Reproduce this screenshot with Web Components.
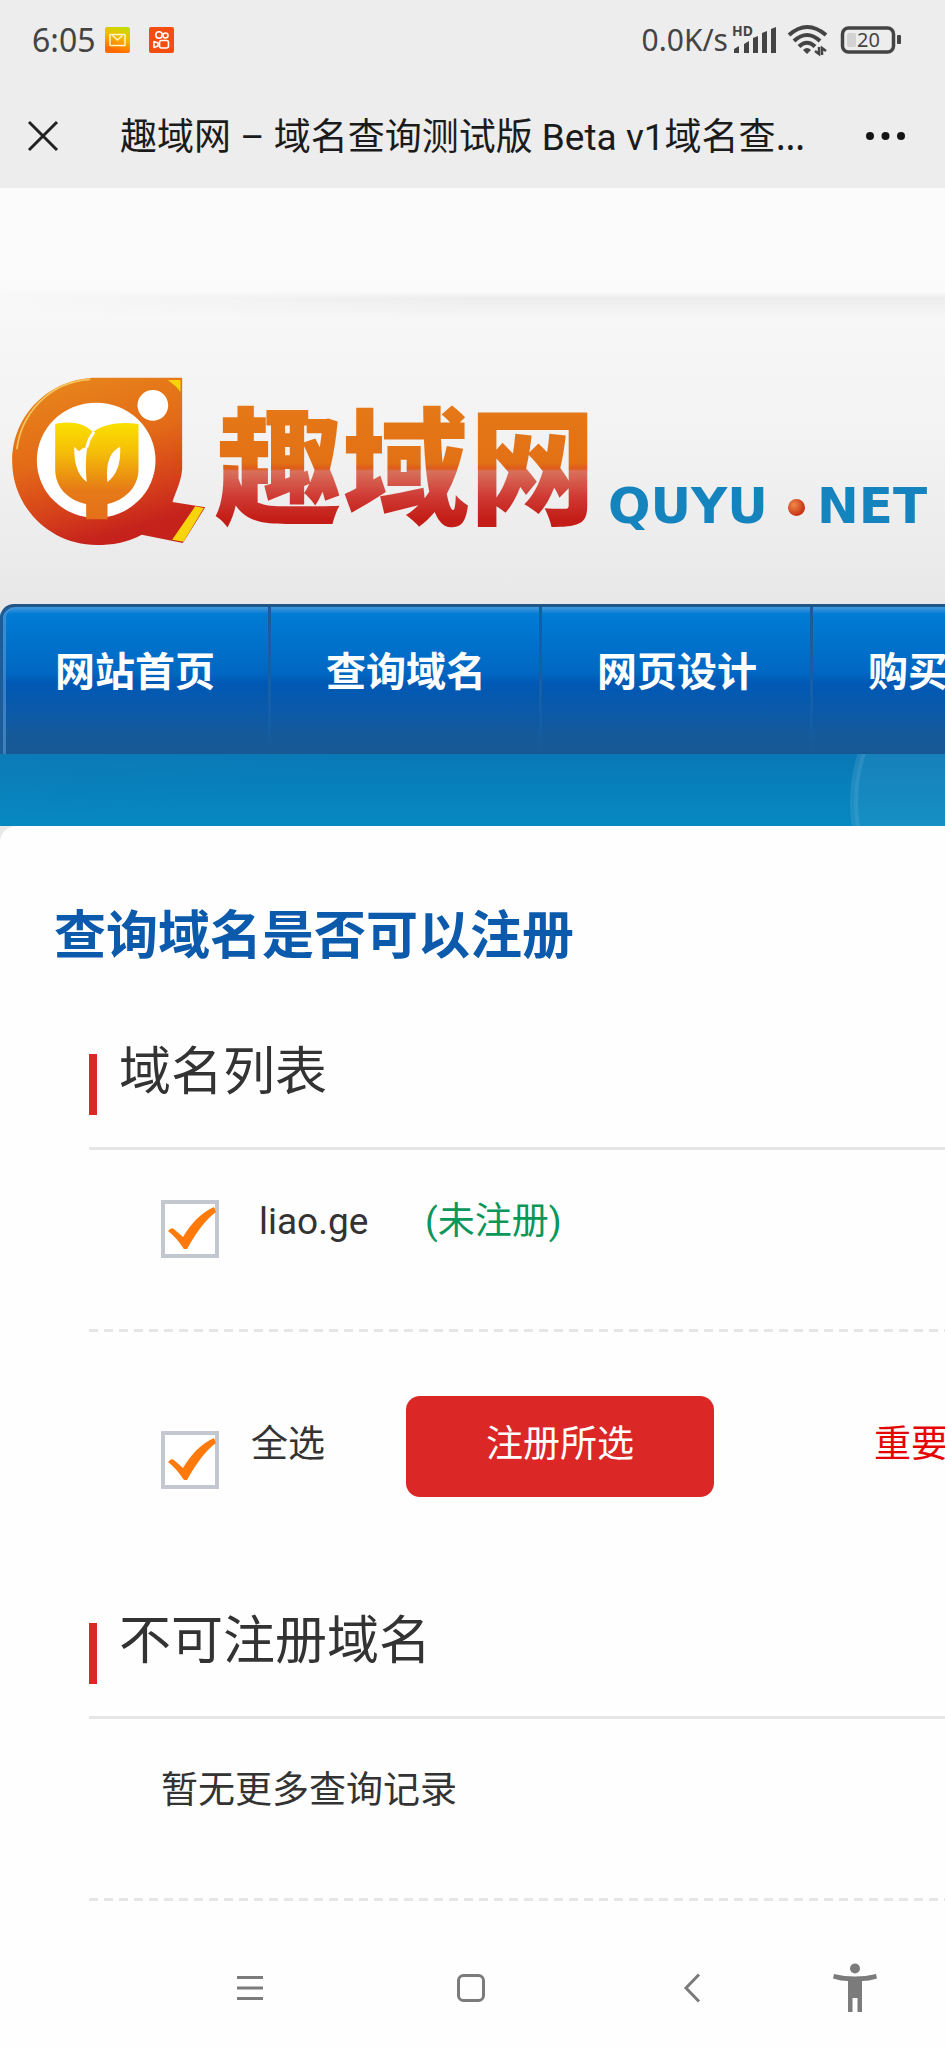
<!DOCTYPE html>
<html lang="zh-CN">
<head>
<meta charset="utf-8">
<meta name="viewport" content="width=device-width, initial-scale=1">
<title>趣域网 – 域名查询</title>
<style>
  html, body { margin: 0; }
  body {
    min-height: 100vh;
    display: flex;
    flex-direction: column;
    overflow-x: hidden;
    background: #fefefe;
    color: #333;
    font-family: Roboto, "Noto Sans CJK SC", sans-serif;
    font-size: 37px;
    line-height: 52px;
  }
</style>
</head>
<body>
<status-bar></status-bar>
<title-bar>趣域网 – 域名查询测试版 Beta v1域名查<b>…</b></title-bar>
<site-header></site-header>
<site-nav>
  <nav-item>网站首页</nav-item>
  <nav-item>查询域名</nav-item>
  <nav-item>网页设计</nav-item>
  <nav-item>购买</nav-item>
</site-nav>
<query-panel heading="查询域名是否可以注册">
  <domain-section heading="域名列表">
    <list-row divided>
      <check-box style="--drop: 4px; --gap: 40px; --width: 264px">liao.ge</check-box>
      <status-text>(未注册)</status-text>
    </list-row>
    <list-row tall>
      <check-box style="--drop: 35px; --lift: 23px; --gap: 32px; --width: 245px">全选</check-box>
      <action-button>注册所选</action-button>
      <status-text warning>重要</status-text>
    </list-row>
  </domain-section>
  <domain-section heading="不可注册域名">
    <list-row divided>暂无更多查询记录</list-row>
  </domain-section>
</query-panel>
<system-nav></system-nav>

<script>
const define = (name, html, setup) => customElements.define(name, class extends HTMLElement {
  constructor() {
    super();
    this.attachShadow({ mode: 'open' }).innerHTML = html;
  }
  connectedCallback() {
    if (setup) setup(this, this.shadowRoot);
  }
});
const setHeading = (host, root) => {
  root.querySelector('.heading').textContent = host.getAttribute('heading');
};

define('status-bar', `
<style>
  :host { display: flex; align-items: center; justify-content: space-between; height: 80px; padding: 0 44px 0 32px; background: #ededed; color: #444; font: 30px/40px "Noto Sans", sans-serif; }
  div { display: flex; align-items: center; }
  svg { display: block; overflow: visible; }
  .time { font-size: 32px; }
  .app { margin-left: 19px; }
  .mail { margin-left: 9px; }
  .signal { margin-left: 4px; }
  .wifi { margin-left: 9px; }
  .battery { margin-left: 12px; }
</style>
<div>
  <span class="time">6:05</span>
  <svg class="mail" width="25" height="26" viewBox="0 0 25 26"><defs><linearGradient id="m" x1="1" y1="0" x2=".7" y2="1"><stop offset="0" stop-color="#b8e500"/><stop offset=".5" stop-color="#f5b800"/><stop offset="1" stop-color="#ff6a00"/></linearGradient></defs><rect width="25" height="26" rx="2" fill="url(#m)"/><path d="M5 7.500h15v11H5zM7.500 8.500l5 4.500 5-4.500" fill="none" stroke="#fff6c8" stroke-width="1.500" stroke-linejoin="round"/></svg>
  <svg class="app" width="25" height="26" viewBox="0 0 25 26"><rect width="25" height="26" rx="2" fill="#f44d12"/><g fill="none" stroke="#fff" stroke-width="1.600"><circle cx="10" cy="8" r="3.200"/><circle cx="16.500" cy="8.500" r="2.500"/><rect x="10.500" y="13.500" width="9" height="7.500" rx="2"/><path d="M5 14.500v6l4-1.500v-3z" stroke-linejoin="round"/></g></svg>
</div>
<div>
  <span>0.0K/s</span>
  <svg class="signal" width="46" height="30" viewBox="0 0 46 30"><text x="0" y="11" font-family="Noto Sans, sans-serif" font-size="14" font-weight="700" fill="#444">HD</text><g fill="#444"><path d="M2 28v-4l5-3v7zM12 28V19l5-3v12zM21 28V13l5-2v17zM30 28V8l5-2v22zM39 28V4l5-2v26z"/></g></svg>
  <svg class="wifi" width="42" height="32" viewBox="0 0 42 32"><g fill="none" stroke="#444" stroke-width="4"><path d="M2 11Q20 -5 39 11"/><path d="M7 17Q20 5 33 17"/><path d="M12 22.500Q20 15 28 22.500"/></g><path d="M16 26q4-4 8 0l-4 4z" fill="#444"/><path d="M32 23v7l-4-3M35 31v-7l4 3" fill="none" stroke="#444" stroke-width="2.500"/></svg>
  <svg class="battery" width="60" height="28" viewBox="0 0 60 28"><rect x="1.500" y="2" width="51" height="24" rx="6" fill="none" stroke="#444" stroke-width="3.500"/><rect x="6" y="7" width="9" height="14" rx="2" fill="#d2d2d2"/><rect x="56" y="9" width="4" height="9" rx="1" fill="#444"/><text x="16" y="21" font-family="Noto Sans, sans-serif" font-size="20" fill="#444">20</text></svg>
</div>`);

define('title-bar', `
<style>
  :host { display: flex; align-items: center; height: 104px; padding: 4px 38px 0 26px; background: #ededed; color: #1b1b1b; font-size: 37px; }
  button { border: 0; padding: 0; background: none; }
  svg { display: block; }
  h1 { flex: 1; margin: 2px 0 0 60px; font: inherit; white-space: nowrap; overflow: hidden; }
  ::slotted(b) { font-weight: 400; font-family: "Noto Sans", sans-serif; }
</style>
<button aria-label="关闭"><svg width="34" height="34" viewBox="0 0 34 34"><path d="M3 3l28 28M31 3L3 31" stroke="#222" stroke-width="3"/></svg></button>
<h1><slot></slot></h1>
<button aria-label="更多"><svg width="42" height="12" viewBox="0 0 42 12"><g fill="#151515"><circle cx="5" cy="6" r="4"/><circle cx="20.500" cy="6" r="4"/><circle cx="36" cy="6" r="4"/></g></svg></button>`);

define('site-header', `
<style>
  :host { display: block; padding: 188px 0 58px 10px; background: linear-gradient(90deg, #f8f8f8 0, #f8f8f800 50%) 0 104px / 100% 28px no-repeat, linear-gradient(#fbfbfb 0, #fafafa 104px, #ededed 110px, #f7f7f7 132px, #f3f3f3 240px, #e8e8e8 100%); }
  a { display: flex; align-items: flex-start; text-decoration: none; white-space: nowrap; }
  svg { display: block; flex: none; }
  .name { margin: 14px 0 0 8px; font: 900 127px/140px "Noto Sans CJK SC", sans-serif; color: transparent; background: linear-gradient(#e67a17 0, #e27115 52%, #dd5c17 56%, #d9705c 58%, #cf3a34 76%, #c41d17 92%); -webkit-background-clip: text; background-clip: text; }
  .latin { display: flex; align-items: center; margin: 104px 0 0 12px; font: 700 50px/52px "DejaVu Sans", sans-serif; color: #1583bd; }
  .dot { width: 17px; height: 17px; margin: 2px 12px 0 20px; border-radius: 50%; background: radial-gradient(circle at 35% 35%, #ef8a4a, #c83215 70%); }
</style>
<a href="#">
  <svg width="197" height="170" viewBox="30 50 590 510" aria-hidden="true">
    <defs>
      <linearGradient id="b" x1="0" y1="0" x2=".35" y2="1"><stop offset="0" stop-color="#e88a1c"/><stop offset=".5" stop-color="#e36a17"/><stop offset=".8" stop-color="#d5401b"/><stop offset="1" stop-color="#c5221c"/></linearGradient>
      <linearGradient id="g" x1="0" y1="0" x2="0" y2="1"><stop offset="0" stop-color="#fbe000"/><stop offset=".3" stop-color="#f5bf08"/><stop offset=".7" stop-color="#e67a17"/><stop offset="1" stop-color="#e4701a"/></linearGradient>
    </defs>
    <path d="M290 55H546V330C542 372 527 395 517 428L615 444 548 551 425 526C380 550 335 557 290 557 150 557 36 445 36 305S150 55 290 55Z" fill="url(#b)"/>
    <path d="M50 270C62 170 140 68 270 60" fill="none" stroke="#f6c55c" stroke-width="5"/>
    <ellipse cx="288" cy="303" rx="178" ry="173" fill="#fff"/>
    <circle cx="458" cy="138" r="46" fill="#fff"/>
    <path d="M165 194C208 184 252 190 278 218 312 192 365 186 415 194V330C415 385 372 424 322 434V480H258V434C205 424 165 385 165 330Z" fill="url(#g)"/>
    <path d="M260 368C230 345 222 310 222 262L236 276C244 268 252 264 262 262 256 290 256 330 260 368ZM322 368C318 325 322 280 360 262 362 310 352 345 322 368Z" fill="#fff"/>
    <path d="M282 218Q266 236 260 264" fill="none" stroke="#fff" stroke-width="9"/>
    <path d="M503 62H541V98L528 82ZM585 441L611 446 550 547 516 541Z" fill="#f8d40c"/>
  </svg>
  <span class="name">趣域网</span>
  <span class="latin">QUYU<span class="dot"></span>NET</span>
</a>`);

define('site-nav', `
<style>
  :host { display: block; background: linear-gradient(170deg, #1583bb 0, #0084be00 60%), linear-gradient(#0878b6 150px, #0689c1 222px); }
  .corner { background: linear-gradient(135deg, #e8e8e8 14px, transparent 14px); }
  nav { display: flex; height: 150px; overflow: hidden; box-sizing: border-box; border-top: 3px solid #1f5587; border-top-left-radius: 14px; background: linear-gradient(#4099dd 0, #2b8cda 3px, #007cd4 7px, #0070ca 42px, #0067c2 66px, #0059b5 76px, #0b59a9 104px, #165a99 130px, #175894 100%); box-shadow: inset 3px 0 0 #1b5c99, inset 6px 0 0 #5a9bd499; }
  .band { overflow: hidden; }
  .band svg { display: block; width: 100%; height: 72px; }
</style>
<div class="corner"><nav><slot></slot></nav></div>
<div class="band"><svg viewBox="0 0 945 72" preserveAspectRatio="xMaxYMid slice" aria-hidden="true"><circle cx="1010" cy="48" r="156" fill="#ffffff10" stroke="#ffffff18" stroke-width="8"/></svg></div>`);

define('nav-item', `
<style>
  :host { display: block; flex: none; }
  a { display: block; height: 147px; box-sizing: border-box; padding: 0 53px 0 55px; border-right: 3px solid; border-image: linear-gradient(#1a5c9c, #1660a8 60%, #165a9900) 1; color: #fff; font-size: 40px; font-weight: 700; line-height: 132px; text-decoration: none; white-space: nowrap; }
</style>
<a href="#"><slot></slot></a>`);

define('query-panel', `
<style>
  :host { display: flex; flex: 1; background: linear-gradient(#e8e8e8 20px, #fefefe 20px); }
  main { display: block; flex: 1; min-width: 0; background: #fefefe; border-top-left-radius: 16px; padding-top: 76px; }
  h2 { margin: 0 0 0 54px; color: #0c5aac; font-size: 52px; font-weight: 700; line-height: 70px; white-space: nowrap; }
</style>
<main><h2 class="heading"></h2><slot></slot></main>`, setHeading);

define('domain-section', `
<style>
  :host { display: block; margin-left: 89px; }
  header { display: flex; align-items: flex-start; padding: 63px 0 32px; border-bottom: 3px solid #e6e6e6; }
  header::before { content: ""; width: 8px; height: 61px; margin-top: 19px; background: #dc2727; }
  h3 { margin: 0 0 0 22px; height: 76px; font-size: 52px; font-weight: 400; line-height: 76px; white-space: nowrap; }
</style>
<header><h3 class="heading"></h3></header><slot></slot>`, setHeading);

define('list-row', `
<style>
  :host { display: flex; align-items: flex-start; box-sizing: border-box; height: 182px; padding: 46px 0 0 72px; overflow: hidden; white-space: nowrap; }
  :host([divided]) { background: repeating-linear-gradient(90deg, #e6e6e6 0 9px, #fff0 9px 15px) 0 100% / 100% 3px no-repeat; }
  :host([tall]) { height: 209px; padding-top: 64px; }
</style>
<slot></slot>`);

define('check-box', `
<style>
  :host { display: block; flex: none; width: var(--width); }
  label { display: flex; align-items: flex-start; }
  .box { display: grid; margin-top: var(--drop); }
  .box > * { grid-area: 1 / 1; }
  input { appearance: none; box-sizing: border-box; width: 58px; height: 58px; margin: 0; border: 4px solid #c3c7cf; background: #fff; }
  svg { display: none; pointer-events: none; }
  input:checked + svg { display: block; }
  .text { margin: var(--lift, 0) 0 0 var(--gap); }
</style>
<label><span class="box"><input type="checkbox" checked><svg width="58" height="58" viewBox="0 0 58 58"><path d="M7 31Q11 26 14 30L22 37Q35 15 53 7L55 12Q41 22 26 49L23 49Q15 37 7 31Z" fill="#ff7a0a"/></svg></span><span class="text"><slot></slot></span></label>`);

define('status-text', `
<style>
  :host { display: block; flex: none; color: #0b965a; }
  :host([warning]) { color: #e60505; margin: 23px 0 0 160px; }
</style>
<slot></slot>`);

define('action-button', `
<style>
  :host { display: block; flex: none; }
  button { display: block; box-sizing: border-box; height: 101px; padding: 0 80px 3px; border: 0; border-radius: 14px; background: #dc2727; color: #fff; font: inherit; }
</style>
<button type="button"><slot></slot></button>`);

define('system-nav', `
<style>
  :host { display: grid; grid-template-columns: 1fr 1fr 1fr 104px; align-items: center; height: 120px; padding: 0 38px 0 139px; background: #fefefe; }
  button { display: flex; align-items: center; justify-content: center; height: 120px; border: 0; padding: 0; background: none; }
  svg { display: block; fill: none; stroke: #7b7b7b; stroke-width: 3; }
</style>
<button aria-label="最近任务"><svg width="28" height="28" viewBox="0 0 28 28"><path d="M1 3.500h26M1 14h26M1 24.500h26"/></svg></button>
<button aria-label="主屏幕"><svg width="30" height="30" viewBox="0 0 30 30"><rect x="2.500" y="2.500" width="25" height="25" rx="5"/></svg></button>
<button aria-label="返回"><svg width="18" height="30" viewBox="0 0 18 30"><path d="M16 1.500L3 15l13 13.500"/></svg></button>
<button aria-label="无障碍"><svg width="44" height="50" viewBox="0 0 44 50"><g fill="#7b7b7b" stroke="none"><circle cx="22" cy="5.500" r="5"/><path d="M1 11Q22 16 43 11L44 15.500Q36 18 29 18V49H24.500V35H19.500V49H15V18Q8 18 0 15.500Z"/></g></svg></button>`);
</script>
</body>
</html>
